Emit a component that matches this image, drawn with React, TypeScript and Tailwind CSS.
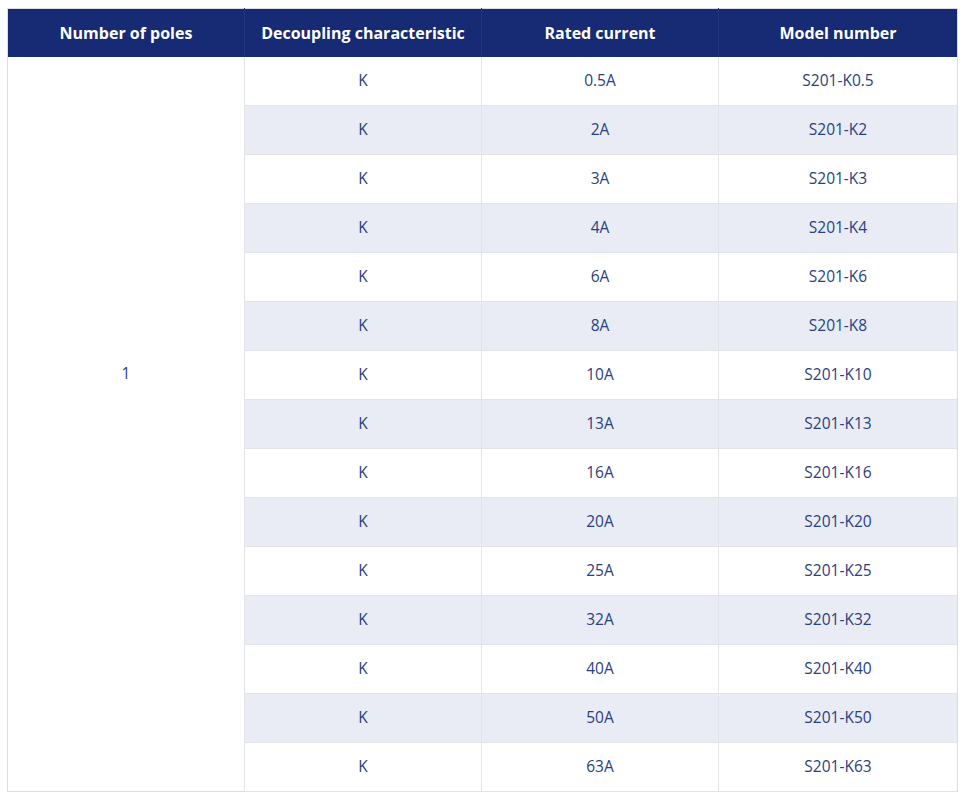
const currents = ["0.5", "2", "3", "4", "6", "8", "10", "13", "16", "20", "25", "32", "40", "50", "63"];

export default function App() {
  return (
    <div className="bg-white w-[964px] h-[803px] pt-2 pl-[7px]" style={{ fontFamily: '"Open Sans", "Noto Sans", sans-serif' }}>
      <table className="w-[950px] table-fixed border-collapse border border-[#dcdde2] text-center">
        <thead>
          <tr className="h-[48px] bg-[#162b73] text-white text-[16px] font-bold">
            <th className="w-[237px] border-r border-[#22367a]">Number of poles</th>
            <th className="w-[237px] border-r border-[#22367a]">Decoupling characteristic</th>
            <th className="w-[237px] border-r border-[#22367a]">Rated current</th>
            <th className="w-[239px]">Model number</th>
          </tr>
        </thead>
        <tbody className="text-[15.5px] text-[#2b3f80]">
          {currents.map((c, i) => (
            <tr key={c} className={i % 2 === 1 ? "h-[49px] bg-[#e9ecf4]" : "h-[49px] bg-white"}>
              {i === 0 && (
                <td rowSpan={currents.length} className="bg-white border-r border-[#e3e4e8] align-top pt-[305px]">
                  1
                </td>
              )}
              <td className="border-b border-r border-[#e3e4e8]">K</td>
              <td className="border-b border-r border-[#e3e4e8]">{c}A</td>
              <td className="border-b border-[#e3e4e8]">S201-K{c}</td>
            </tr>
          ))}
        </tbody>
      </table>
    </div>
  );
}
